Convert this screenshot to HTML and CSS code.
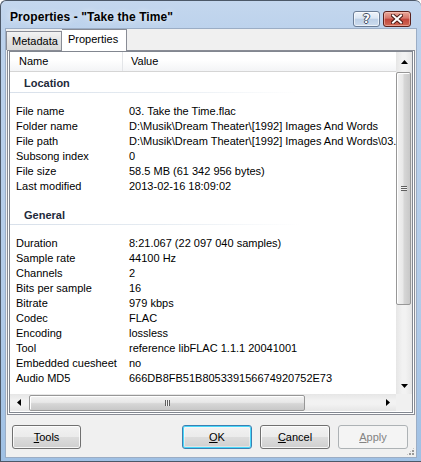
FILE: index.html
```html
<!DOCTYPE html>
<html>
<head>
<meta charset="utf-8">
<title>Properties</title>
<link rel="stylesheet" href="styles.css">
</head>
<body>
<div class="window">
  <div class="titlebar">
    <span class="title">Properties - "Take the Time"</span>
    <div class="caption-btns">
      <div class="cbtn help"><span>?</span></div>
      <div class="cbtn close">
        <svg width="12" height="10" viewBox="0 0 12 10">
          <path d="M2 1.5 L10 8.5 M10 1.5 L2 8.5" stroke="#4a1a16" stroke-width="4" stroke-linecap="square"/>
          <path d="M2 1.5 L10 8.5 M10 1.5 L2 8.5" stroke="#ffffff" stroke-width="2" stroke-linecap="square"/>
        </svg>
      </div>
    </div>
  </div>
  <div class="client">
    <div class="tabs">
      <div class="tab">Metadata</div>
      <div class="tab active">Properties</div>
    </div>
    <div class="panel">
      <div class="listview">
        <div class="lv-content">
          <div class="lv-header">
            <div class="hcol hname">Name</div>
            <div class="hcol hvalue">Value</div>
          </div>
          <div class="group first">Location</div>
          <div class="rows">
            <div class="row"><span class="k">File name</span><span class="v">03. Take the Time.flac</span></div>
            <div class="row"><span class="k">Folder name</span><span class="v">D:\Musik\Dream Theater\[1992] Images And Words</span></div>
            <div class="row"><span class="k">File path</span><span class="v">D:\Musik\Dream Theater\[1992] Images And Words\03.</span></div>
            <div class="row"><span class="k">Subsong index</span><span class="v">0</span></div>
            <div class="row"><span class="k">File size</span><span class="v">58.5 MB (61 342 956 bytes)</span></div>
            <div class="row"><span class="k">Last modified</span><span class="v">2013-02-16 18:09:02</span></div>
          </div>
          <div class="group">General</div>
          <div class="rows">
            <div class="row"><span class="k">Duration</span><span class="v">8:21.067 (22 097 040 samples)</span></div>
            <div class="row"><span class="k">Sample rate</span><span class="v">44100 Hz</span></div>
            <div class="row"><span class="k">Channels</span><span class="v">2</span></div>
            <div class="row"><span class="k">Bits per sample</span><span class="v">16</span></div>
            <div class="row"><span class="k">Bitrate</span><span class="v">979 kbps</span></div>
            <div class="row"><span class="k">Codec</span><span class="v">FLAC</span></div>
            <div class="row"><span class="k">Encoding</span><span class="v">lossless</span></div>
            <div class="row"><span class="k">Tool</span><span class="v">reference libFLAC 1.1.1 20041001</span></div>
            <div class="row"><span class="k">Embedded cuesheet</span><span class="v">no</span></div>
            <div class="row"><span class="k">Audio MD5</span><span class="v">666DB8FB51B805339156674920752E73</span></div>
          </div>
        </div>
        <div class="vscroll">
          <div class="sarrow"><svg width="7" height="4" viewBox="0 0 7 4"><path d="M0 4 L3.5 0 L7 4 Z" fill="#000"/></svg></div>
          <div class="vtrack">
            <div class="vthumb"><span class="grip-v"></span></div>
          </div>
          <div class="sarrow"><svg width="7" height="4" viewBox="0 0 7 4"><path d="M0 0 L3.5 4 L7 0 Z" fill="#000"/></svg></div>
        </div>
        <div class="hscroll">
          <div class="sarrow-h"><svg width="4" height="7" viewBox="0 0 4 7"><path d="M4 0 L0 3.5 L4 7 Z" fill="#000"/></svg></div>
          <div class="htrack">
            <div class="hthumb"><span class="grip-h"></span></div>
          </div>
          <div class="sarrow-h"><svg width="4" height="7" viewBox="0 0 4 7"><path d="M0 0 L4 3.5 L0 7 Z" fill="#000"/></svg></div>
        </div>
        <div class="corner"></div>
      </div>
    </div>
    <div class="buttons">
      <div class="btn tools"><span><u>T</u>ools</span></div>
      <div class="spacer"></div>
      <div class="btn default"><span><u>O</u>K</span></div>
      <div class="btn"><span><u>C</u>ancel</span></div>
      <div class="btn disabled"><span><u>A</u>pply</span></div>
    </div>
    <div class="sizegrip"></div>
  </div>
</div>
</body>
</html>
```

FILE: styles.css
```css
html, body {
  margin: 0;
  padding: 0;
  background: #ffffff;
}
body {
  width: 421px;
  height: 462px;
  overflow: hidden;
  font-family: "Liberation Sans", Arial, sans-serif;
  font-size: 11px;
  color: #000;
}
.window {
  width: 421px;
  height: 462px;
  box-sizing: border-box;
  border: 1px solid #4c5868;
  border-right: none;
  border-radius: 6px 6px 0 0;
  background: linear-gradient(to bottom, #c4d7ee 0px, #bcd2ec 30px, #b2cbe8 300px, #9fc0e4 462px);
  display: flex;
  flex-direction: column;
  position: relative;
}
.titlebar {
  height: 28px;
  display: flex;
  align-items: flex-start;
  position: relative;
}
.title {
  font-weight: bold;
  font-size: 12px;
  letter-spacing: 0.1px;
  margin-left: 9px;
  margin-top: 9px;
  color: #000;
  text-shadow: 0 0 6px rgba(255,255,255,0.9);
}
.caption-btns {
  position: absolute;
  top: 10px;
  right: 10px;
  display: flex;
  gap: 3px;
}
.cbtn {
  height: 16px;
  box-sizing: border-box;
  border-radius: 3px;
  display: flex;
  align-items: center;
  justify-content: center;
}
.help {
  width: 27px;
  border: 1px solid #6a7c95;
  background: linear-gradient(to bottom, #eef3fa 0%, #dbe6f3 45%, #bccfe6 50%, #cddcee 100%);
  box-shadow: inset 0 0 0 1px rgba(255,255,255,0.6);
}
.help span {
  font-family: "DejaVu Sans", sans-serif;
  font-weight: bold;
  font-size: 12px;
  color: #fff;
  line-height: 12px;
  text-shadow: -1px 0 #3f4d61, 1px 0 #3f4d61, 0 -1px #3f4d61, 0 1px #3f4d61;
}
.close {
  width: 28px;
  border: 1px solid #5a211c;
  background: linear-gradient(to bottom, #e9a99b 0%, #d6766a 45%, #c2443a 50%, #cf6a55 100%);
  box-shadow: inset 0 0 0 1px rgba(255,210,200,0.5);
}
.client {
  position: relative;
  margin-left: 5px;
  width: 410px;
  height: 428px;
  background: #f0f0f0;
  box-shadow: 0 0 0 1px #9badc5;
  display: flex;
  flex-direction: column;
}
.tabs {
  height: 21px;
  display: flex;
  align-items: flex-end;
  position: relative;
  z-index: 2;
}
.tab {
  box-sizing: border-box;
  height: 19px;
  width: 56px;
  border: 1px solid #898c95;
  border-bottom: none;
  background: linear-gradient(to bottom, #f3f3f3, #e3e3e3 50%, #d9d9d9);
  padding-left: 5px;
  line-height: 18px;
}
.tab.active {
  width: 65px;
  height: 22px;
  margin-bottom: -1px;
  background: #ffffff;
  padding-left: 6px;
  line-height: 18px;
  border-left: none;
}
.panel {
  margin-left: 1px;
  width: 408px;
  height: 365px;
  box-sizing: border-box;
  border: 1px solid #898c95;
  background: #fff;
  padding: 0 1px 1px 1px;
}
.listview {
  width: 404px;
  height: 362px;
  box-sizing: border-box;
  border: 1px solid #828790;
  display: grid;
  grid-template-columns: 386px 16px;
  grid-template-rows: 342px 17px;
  background: #fff;
}
.lv-content {
  overflow: hidden;
  position: relative;
}
.lv-header {
  height: 20px;
  box-sizing: border-box;
  border-bottom: 1px solid #d5d5d5;
  background: linear-gradient(to bottom, #ffffff 0%, #ffffff 40%, #f3f4f6 100%);
  display: flex;
}
.hcol {
  line-height: 18px;
  box-sizing: border-box;
}
.hname {
  width: 113px;
  padding-left: 9px;
  border-right: 1px solid #e3e5e8;
}
.hvalue {
  padding-left: 8px;
}
.group {
  margin-top: 12px;
  height: 19px;
  box-sizing: border-box;
  padding-bottom: 1px;
  line-height: 18px;
  padding-left: 14px;
  font-weight: bold;
  color: #1e2a3a;
  background: linear-gradient(to right, #d8e0ea 0px, #e6ecf2 150px, #ffffff 290px) left bottom / 100% 1px no-repeat;
}
.group.first {
  margin-top: 2px;
}
.rows {
  padding-top: 11px;
}
.row {
  height: 15px;
  line-height: 15px;
  display: flex;
  white-space: nowrap;
}
.k {
  width: 113px;
  flex: none;
  padding-left: 6px;
  box-sizing: border-box;
}
.v {
  padding-left: 6px;
}
.vscroll {
  display: flex;
  flex-direction: column;
  background: linear-gradient(to right, #e6e6e6, #f2f2f2 40%, #f2f2f2 60%, #e6e6e6);
}
.sarrow {
  height: 20px;
  flex: none;
  display: flex;
  align-items: center;
  justify-content: center;
}
.sarrow:last-child {
  height: 17px;
}
.vtrack {
  flex: 1;
  position: relative;
}
.vthumb {
  position: absolute;
  left: 0;
  right: 1px;
  top: 0;
  height: 233px;
  box-sizing: border-box;
  border: 1px solid #979797;
  border-radius: 2px;
  background: linear-gradient(to right, #f2f2f2 0%, #e8e8e8 45%, #d6d6d6 55%, #c8c8c8 100%);
  box-shadow: inset 1px 1px 0 #ffffff;
  display: flex;
  align-items: center;
  justify-content: center;
}
.grip-v {
  width: 6px;
  height: 5px;
  background: repeating-linear-gradient(to bottom, #5f5f5f 0, #5f5f5f 1px, #f0f0f0 1px, #f0f0f0 2px);
}
.hscroll {
  display: flex;
  background: linear-gradient(to bottom, #e6e6e6, #f2f2f2 40%, #f2f2f2 60%, #e6e6e6);
}
.sarrow-h {
  width: 17px;
  flex: none;
  display: flex;
  align-items: center;
  justify-content: center;
}
.htrack {
  flex: 1;
  position: relative;
}
.hthumb {
  position: absolute;
  left: 2px;
  top: 1px;
  bottom: 0;
  width: 276px;
  box-sizing: border-box;
  border: 1px solid #979797;
  border-radius: 2px;
  background: linear-gradient(to bottom, #f2f2f2 0%, #e8e8e8 45%, #d6d6d6 55%, #c8c8c8 100%);
  box-shadow: inset 1px 1px 0 #ffffff;
  display: flex;
  align-items: center;
  justify-content: center;
}
.grip-h {
  width: 5px;
  height: 6px;
  background: repeating-linear-gradient(to right, #5f5f5f 0, #5f5f5f 1px, #f0f0f0 1px, #f0f0f0 2px);
}
.corner {
  background: #f0f0f0;
}
.buttons {
  display: flex;
  margin-top: 10px;
  padding-left: 6px;
  padding-right: 8px;
  gap: 8px;
}
.spacer {
  flex: 1;
}
.btn {
  width: 70px;
  height: 24px;
  box-sizing: border-box;
  border: 1px solid #707070;
  border-radius: 3px;
  background: linear-gradient(to bottom, #f2f2f2 0%, #ebebeb 50%, #dddddd 50%, #cfcfcf 100%);
  box-shadow: inset 0 0 0 1px rgba(255,255,255,0.8);
  display: flex;
  align-items: center;
  justify-content: center;
  line-height: 14px;
}
.btn.tools {
  width: 69px;
}
.btn.default {
  border-color: #3c7fb1;
  box-shadow: inset 0 0 0 1px #48d8fb, inset 0 0 0 2px rgba(255,255,255,0.4);
}
.btn.disabled {
  border-color: #adb2b5;
  background: #f4f4f4;
  box-shadow: none;
  color: #838383;
}
.btn u {
  text-decoration: underline;
  text-underline-offset: 1px;
}
.sizegrip {
  position: absolute;
  right: 1px;
  bottom: 1px;
  width: 9px;
  height: 9px;
  background:
    radial-gradient(circle at 1px 1px, #9a9a9a 0.8px, transparent 1px) 0 0 / 3px 3px;
  clip-path: polygon(100% 0, 100% 100%, 0 100%);
}
```
